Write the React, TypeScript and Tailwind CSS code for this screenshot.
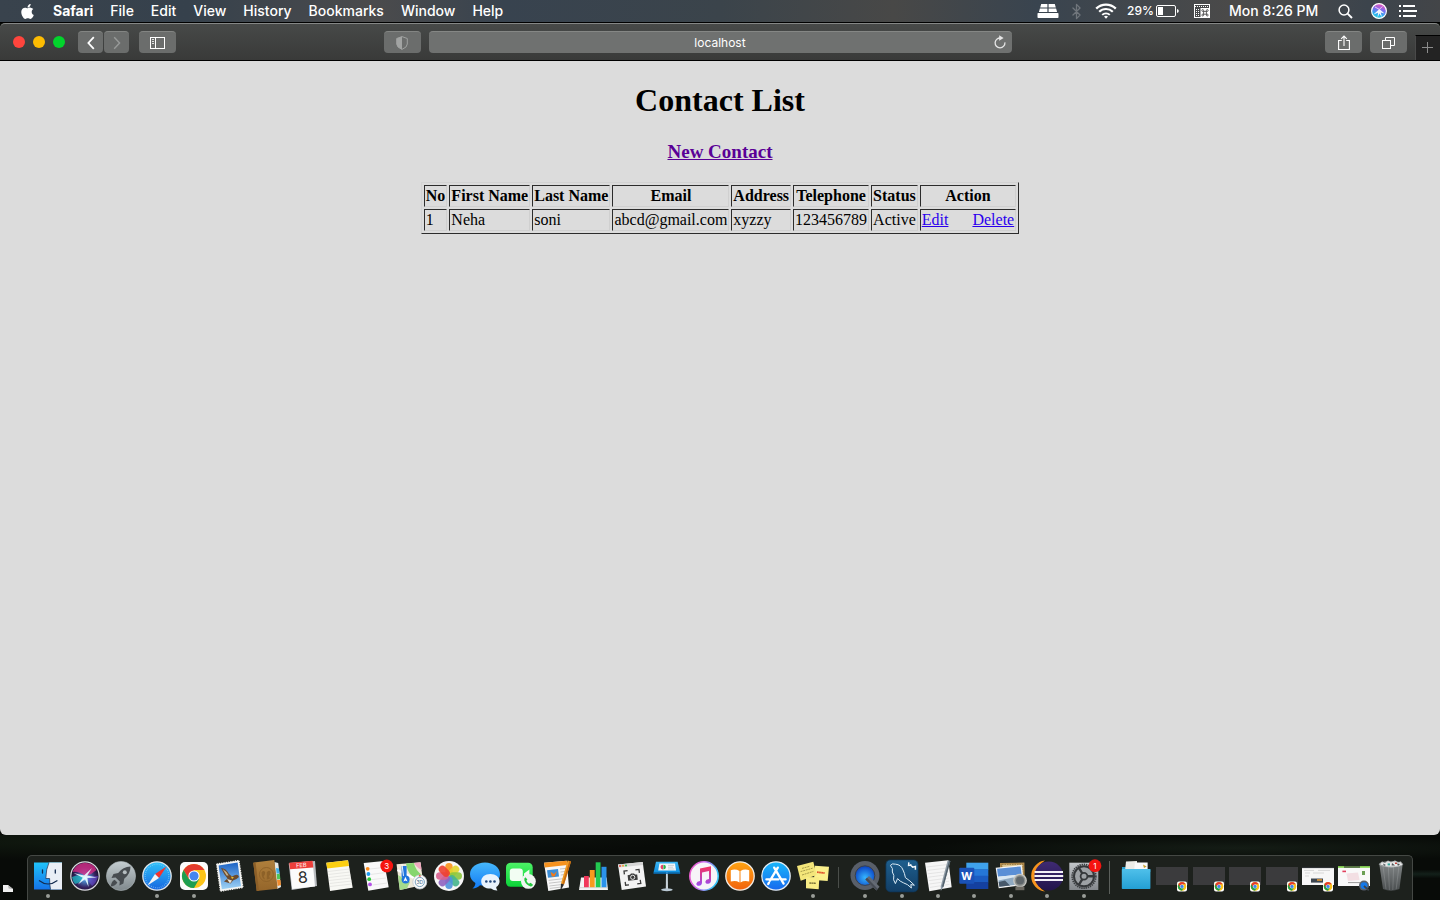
import type { ReactNode } from "react";
import { FaApple } from "react-icons/fa";
import { Bluetooth } from "lucide-react";

const serif = "font-['Liberation_Serif','Times_New_Roman',serif]";
const sans = "font-['Inter','Liberation_Sans',sans-serif]";

/* ---------- Menu bar ---------- */

const menus = ["File", "Edit", "View", "History", "Bookmarks", "Window", "Help"];

function StatusIcon({ w, h, children }: { w: number; h: number; children: ReactNode }) {
  return (
    <svg width={w} height={h} viewBox={`0 0 ${w} ${h}`} fill="none" className="shrink-0" aria-hidden="true">
      {children}
    </svg>
  );
}

function MenuBar() {
  return (
    <header
      className={`${sans} flex h-[23px] shrink-0 items-center justify-between border-b border-black bg-[linear-gradient(90deg,#39434d_0%,#36414c_13%,#4b4b4c_26%,#38434f_35%,#3b444b_50%,#484847_62%,#39444f_72%,#4b4a49_86%,#3c444c_95%,#434548_100%)] pl-[19px] pr-[22px] text-[14px] leading-[22px] text-white`}
    >
      <nav className="flex items-center gap-[17px] font-medium">
        <button aria-label="Apple" className="text-[17px]">
          <FaApple />
        </button>
        <button className="font-bold">Safari</button>
        {menus.map((m) => (
          <button key={m}>{m}</button>
        ))}
      </nav>
      <div className="flex items-center">
        <StatusIcon w={22} h={16}>
          <path
            d="M4.2 1H10.4V4.4H3.2ZM11.6 1H17.8L18.8 4.4H11.6ZM2.9 5.4H10.4V9H1.9ZM11.6 5.4H19.1L20.1 9H11.6Z"
            fill="#fff"
          />
          <rect x="0.5" y="10" width="21" height="5" rx="0.8" fill="#fff" />
        </StatusIcon>
        <Bluetooth className="ml-[9px] h-[17px] w-[17px] text-[#70767c]" strokeWidth={1.8} />
        <span className="ml-[10px] flex">
          <StatusIcon w={22} h={16}>
            <path d="M1.2 5.6A14 14 0 0 1 20.8 5.6" stroke="#fff" strokeWidth="2.3" />
            <path d="M4.2 8.8A9.7 9.7 0 0 1 17.8 8.8" stroke="#fff" strokeWidth="2.2" />
            <path d="M7.2 11.9A5.5 5.5 0 0 1 14.8 11.9" stroke="#fff" strokeWidth="2" />
            <path d="M11 15.8L9 13.6A2.9 2.9 0 0 1 13 13.6Z" fill="#fff" />
          </StatusIcon>
        </span>
        <span className="ml-[10px] w-[29px] text-[12px] font-medium">29%</span>
        <StatusIcon w={23} h={12}>
          <rect x="0.5" y="0.5" width="19" height="11" rx="1.5" stroke="#fff" />
          <rect x="2" y="2" width="5" height="8" fill="#fff" />
          <path d="M21 4V8Q22.8 7.4 22.8 6T21 4Z" fill="#fff" />
        </StatusIcon>
        <span className="ml-[15px] flex">
          <StatusIcon w={16} h={15}>
            <rect x="0.5" y="0.5" width="15" height="13" stroke="#fff" />
            <path d="M1 2.5H15" stroke="#fff" strokeDasharray="1 1" />
            <path d="M2 5.5H6M2 7.5H6M2 9.5H6M2 11.5H6" stroke="#fff" strokeDasharray="1 1" />
            <rect x="6.5" y="4" width="9" height="9.5" fill="#fff" />
            <path
              d="M9.6 7.4H12.4V10.2H9.6ZM9.6 7.4H8.7A.9 .9 0 1 1 9.6 6.5ZM12.4 7.4V6.5A.9 .9 0 1 1 13.3 7.4ZM9.6 10.2V11.1A.9 .9 0 1 1 8.7 10.2ZM12.4 10.2H13.3A.9 .9 0 1 1 12.4 11.1Z"
              stroke="#3c3c3c"
              strokeWidth="0.8"
            />
          </StatusIcon>
        </span>
        <span className="ml-[19px] w-[90px] whitespace-nowrap font-medium">Mon 8:26 PM</span>
        <span className="ml-[19px] mt-px flex">
          <StatusIcon w={15} h={15}>
            <circle cx="6" cy="6" r="4.9" stroke="#fff" strokeWidth="1.5" />
            <path d="M9.6 9.6L14 14" stroke="#fff" strokeWidth="1.9" />
          </StatusIcon>
        </span>
        <span className="ml-[17px] flex">
          <StatusIcon w={18} h={18}>
            <defs>
              <linearGradient id="mini-siri" x1="0.6" y1="0" x2="0.3" y2="1">
                <stop offset="0" stopColor="#f04fb8" />
                <stop offset="0.4" stopColor="#7a6df0" />
                <stop offset="0.75" stopColor="#25b4f0" />
                <stop offset="1" stopColor="#3fdcd4" />
              </linearGradient>
            </defs>
            <circle cx="9" cy="9" r="7.4" fill="url(#mini-siri)" stroke="#fff" strokeWidth="1.2" />
            <path d="M9.4 7L14.6 11.4L10.8 10.4L12 15.4L9.4 11.4L7.6 15.6L8 10.8L3.4 12.4Z" fill="#fff" opacity="0.92" />
            <path d="M5 5L9.4 7.4L12.4 4.4" stroke="#fbd3f0" strokeWidth="0.9" />
          </StatusIcon>
        </span>
        <span className="ml-[11px] flex">
          <StatusIcon w={19} h={12}>
            <path d="M0 1H2M0 6H2M0 11H2" stroke="#fff" strokeWidth="2" />
            <path d="M4 1H16M4 6H18M4 11H17" stroke="#fff" strokeWidth="2" />
          </StatusIcon>
        </span>
      </div>
    </header>
  );
}

/* ---------- Browser toolbar ---------- */

function ToolButton({ label, className, children }: { label: string; className: string; children: ReactNode }) {
  return (
    <button
      aria-label={label}
      className={`flex h-[22px] items-center justify-center rounded-[4px] border-t border-[#838583] bg-[#6b6d6c] ${className}`}
    >
      {children}
    </button>
  );
}

function Toolbar() {
  return (
    <div className="grid h-[38px] shrink-0 grid-cols-[1fr_minmax(0,583px)_1fr] items-center rounded-t-[5px] border-b border-t border-b-black border-t-[#858786] bg-gradient-to-b from-[#474948] to-[#393a39]">
      <div className="flex items-center pl-[13px] pr-2">
        <div className="flex gap-2">
          <button aria-label="Close" className="h-3 w-3 rounded-full bg-[#ff453d]" />
          <button aria-label="Minimize" className="h-3 w-3 rounded-full bg-[#fdbc02]" />
          <button aria-label="Zoom" className="h-3 w-3 rounded-full bg-[#02d42c]" />
        </div>
        <div className="ml-[13px] flex gap-px">
          <ToolButton label="Back" className="w-[25px]">
            <StatusIcon w={8} h={14}>
              <path d="M6.8 1.2L1.4 7L6.8 12.8" stroke="#fff" strokeWidth="1.8" />
            </StatusIcon>
          </ToolButton>
          <ToolButton label="Forward" className="w-[25px]">
            <StatusIcon w={8} h={14}>
              <path d="M1.2 1.2L6.6 7L1.2 12.8" stroke="#989a99" strokeWidth="1.4" />
            </StatusIcon>
          </ToolButton>
        </div>
        <ToolButton label="Sidebar" className="ml-[10px] w-[37px]">
          <StatusIcon w={15} h={12}>
            <rect x="0.5" y="0.5" width="14" height="11" stroke="#fff" />
            <path d="M5.5 0V12" stroke="#fff" />
            <path d="M2 2.5H4M2 4.5H4M2 6.5H4" stroke="#fff" strokeWidth="0.8" />
          </StatusIcon>
        </ToolButton>
        <ToolButton label="Privacy report" className="ml-auto w-[37px]">
          <StatusIcon w={12} h={14}>
            <path d="M6 0.6L11.3 2.5V8Q11.3 11.3 6 13.4Q0.7 11.3 0.7 8V2.5Z" stroke="#9fa1a0" />
            <path d="M6 0.6V13.4Q0.7 11.3 0.7 8V2.5Z" fill="#a2a4a3" />
          </StatusIcon>
        </ToolButton>
      </div>
      <div className="flex h-[22px] items-center rounded-[4px] border-t border-[#858785] bg-[#6f7170] pl-6">
        <input
          aria-label="Address"
          defaultValue="localhost"
          className={`${sans} min-w-0 flex-1 bg-transparent text-center text-[12px] leading-5 text-white outline-none`}
        />
        <button aria-label="Reload" className="flex w-6 justify-center pb-0.5">
          <StatusIcon w={13} h={14}>
            <path d="M8 3.1A4.9 4.9 0 1 0 11.9 7.4" stroke="#e6e6e6" strokeWidth="1.3" />
            <path d="M6.2 0.2L10.6 3L6.2 5.8Z" fill="#e6e6e6" />
          </StatusIcon>
        </button>
      </div>
      <div className="flex h-full items-center justify-end">
        <ToolButton label="Share" className="w-[37px]">
          <StatusIcon w={12} h={16}>
            <path d="M3.8 5.5H0.6V14.5H11.4V5.5H8.2" stroke="#fff" strokeWidth="1.1" />
            <path d="M6 11V1.2M3.2 3.9L6 1.1L8.8 3.9" stroke="#fff" strokeWidth="1.1" />
          </StatusIcon>
        </ToolButton>
        <ToolButton label="Tab overview" className="ml-2 w-[37px]">
          <StatusIcon w={13} h={12}>
            <rect x="0.5" y="3.5" width="8" height="8" stroke="#fff" />
            <path d="M3.5 3V0.5H12.5V8.5H9" stroke="#fff" />
          </StatusIcon>
        </ToolButton>
        <button
          aria-label="New tab"
          className="ml-2 flex h-[25px] w-[25px] items-center justify-center self-end border-l border-t border-l-[#4a4a4a] border-t-black bg-[#232323] pb-0.5 pr-0.5"
        >
          <StatusIcon w={11} h={11}>
            <path d="M5.5 0V11M0 5.5H11" stroke="#8c8c8c" />
          </StatusIcon>
        </button>
      </div>
    </div>
  );
}

/* ---------- Page ---------- */

const columns = ["No", "First Name", "Last Name", "Email", "Address", "Telephone", "Status"];
const contacts = [["1", "Neha", "soni", "abcd@gmail.com", "xyzzy", "123456789", "Active"]];
const cell = "border border-b-[#d0d0d0] border-l-[#2c2c2c] border-r-[#d0d0d0] border-t-[#2c2c2c] p-px";

function ContactPage() {
  return (
    <main className={`${serif} flex flex-1 flex-col items-center rounded-b-[6px] bg-[#dcdcdc] pt-[21px] text-black`}>
      <h1 className="text-[32px] font-bold leading-[37px]">Contact List</h1>
      <h3 className="mt-[22px] text-[19px] font-bold leading-[22px]">
        <a href="#new" className="text-[#5a0096] underline">
          New Contact
        </a>
      </h3>
      <table className="mt-[19px] border-separate border-spacing-[2px] border border-b-[#2c2c2c] border-l-[#d3d3d3] border-r-[#2c2c2c] border-t-[#d3d3d3] text-[16px] leading-[18px]">
        <thead>
          <tr>
            {columns.map((c) => (
              <th key={c} className={`${cell} text-center font-bold`}>
                {c}
              </th>
            ))}
            <th className={`${cell} text-center font-bold`}>Action</th>
          </tr>
        </thead>
        <tbody>
          {contacts.map((row) => (
            <tr key={row[0]}>
              {row.map((v, i) => (
                <td key={i} className={cell}>
                  {v}
                </td>
              ))}
              <td className={cell}>
                <a href="#edit" className="text-[#2a00ee] underline">
                  Edit
                </a>
                <a href="#delete" className="ml-6 text-[#2a00ee] underline">
                  Delete
                </a>
              </td>
            </tr>
          ))}
        </tbody>
      </table>
    </main>
  );
}

/* ---------- Dock icons, drawn on a 36x36 grid ---------- */

function Gradients() {
  const vertical: [string, string, string][] = [
    ["g-finder", "#1fc3fb", "#1573e8"],
    ["g-rocket", "#c4cdd0", "#7f888c"],
    ["g-safari", "#2fc2f8", "#1665e0"],
    ["g-mail", "#1b62c4", "#9fd3f6"],
    ["g-book", "#b0803c", "#94652a"],
    ["g-msg", "#46b8fc", "#127af5"],
    ["g-green", "#4cf266", "#0bd338"],
    ["g-music", "#f8335c", "#9a4cf2"],
    ["g-books", "#ffa412", "#f2620d"],
    ["g-store", "#19b7fb", "#1769ee"],
    ["g-key", "#3db7f5", "#0b8de0"],
    ["g-sql", "#1e5f8e", "#123e66"],
    ["g-folder", "#4fc0ea", "#239fd4"],
    ["g-pref", "#c2c6ca", "#83878c"],
    ["g-trash", "#9a9ea0", "#55595c"],
    ["g-eclipse", "#3f2a72", "#22154c"],
  ];
  return (
    <svg width="0" height="0" className="absolute" aria-hidden="true">
      <defs>
        {vertical.map(([id, a, b]) => (
          <linearGradient key={id} id={id} x1="0" y1="0" x2="0" y2="1">
            <stop offset="0" stopColor={a} />
            <stop offset="1" stopColor={b} />
          </linearGradient>
        ))}
        <linearGradient id="g-ring" x1="0" y1="0" x2="1" y2="0.3">
          <stop offset="0" stopColor="#f557c4" />
          <stop offset="0.5" stopColor="#c86df0" />
          <stop offset="1" stopColor="#39c3f7" />
        </linearGradient>
        <radialGradient id="g-siri" cx="0.5" cy="0.55" r="0.55">
          <stop offset="0" stopColor="#e8f6ff" />
          <stop offset="0.25" stopColor="#4a86c8" />
          <stop offset="0.65" stopColor="#35225f" />
          <stop offset="1" stopColor="#120e24" />
        </radialGradient>
        <radialGradient id="g-qt" cx="0.5" cy="0.6" r="0.55">
          <stop offset="0" stopColor="#35b6ff" />
          <stop offset="1" stopColor="#0d49c8" />
        </radialGradient>
      </defs>
    </svg>
  );
}

function ChromeMark({ x, y, r }: { x: number; y: number; r: number }) {
  return (
    <g transform={`translate(${x} ${y}) scale(${r / 12})`}>
      <circle r="12" fill="#fcc419" />
      <path d="M-10.4 -6A12 12 0 0 1 10.4 -6H0L-5.2 3Z" fill="#e33b2e" />
      <path d="M-10.4 -6A12 12 0 0 0 0 12L5.2 3L0 0L-5.2 3Z" fill="#1e9e50" />
      <circle r="5.6" fill="#fff" />
      <circle r="4.6" fill="#4285f0" />
    </g>
  );
}

function Badge({ x, y, n }: { x: number; y: number; n: string }) {
  return (
    <>
      <circle cx={x} cy={y} r="6.4" fill="#f5140f" />
      <text x={x} y={y + 3} fontSize="8" textAnchor="middle" fill="#fff">
        {n}
      </text>
    </>
  );
}

const petals = ["#f9951b", "#e3d62c", "#8cc63e", "#45b58c", "#4f93dc", "#8f63c0", "#d9608f", "#ee3f30"];

const icons: Record<string, ReactNode> = {
  Finder: (
    <>
      <rect x="4" y="4.5" width="28" height="27" fill="url(#g-finder)" />
      <path d="M19 4.5H32V31.5H20.5Q19.5 26 19.6 20.5H15.8Q16 11 19 4.5Z" fill="#e9eef6" />
      <path d="M12.5 12V15M25.3 12V15" stroke="#132b50" strokeWidth="1.3" strokeLinecap="round" />
      <path d="M9 22.5Q18 29.5 27.4 22.5" stroke="#132b50" strokeWidth="1.1" fill="none" />
      <path d="M19 4.5Q16 11 15.8 20.5H19.6Q19.5 26 20.5 31.5" stroke="#132b50" strokeWidth="0.7" fill="none" />
    </>
  ),
  Siri: (
    <>
      <circle cx="18" cy="18" r="14.2" fill="url(#g-siri)" stroke="#d9d9de" strokeWidth="1.2" />
      <path d="M5.4 14Q9 5.4 18 4.8Q27 5.4 29.4 12Q24 17 18.5 18.5Q12 13 5.4 14Z" fill="#d62d86" opacity="0.8" />
      <path d="M5 19Q12 15.6 18.5 18.5Q13 25 8 26Q5.4 23 5 19Z" fill="#1fb9c4" opacity="0.75" />
      <path d="M18.5 18.5L31 18Q29.6 25 25 28Z" fill="#6a4fd8" opacity="0.6" />
      <path d="M6.6 15L17 17.4L25 10L20.2 17.6L30 19.6L20.4 20L21.6 29L18 21.2L11 26.4L15.8 19.8Z" fill="#e9fdff" opacity="0.9" />
    </>
  ),
  Launchpad: (
    <>
      <circle cx="18" cy="18" r="14.6" fill="url(#g-rocket)" stroke="#aab2b5" strokeWidth="0.6" />
      <path
        d="M27.5 8.5Q20 8.5 15.2 15L10.5 16L8.5 20L12.6 19.4L16.8 23.4L16.4 27.6L20.4 25.4L21.2 20.8Q27.5 16 27.5 8.5Z"
        fill="#474c50"
      />
      <circle cx="21.8" cy="14.2" r="2" fill="#b5bdc0" />
      <path d="M11.6 21.8L14.4 24.6Q12.5 28 7.8 28.4Q8.2 23.6 11.6 21.8Z" fill="#474c50" />
    </>
  ),
  Safari: (
    <>
      <circle cx="18" cy="18" r="14.2" fill="url(#g-safari)" stroke="#dfe4e8" strokeWidth="1.3" />
      <circle cx="18" cy="18" r="11.8" fill="none" stroke="#9ed6fa" strokeWidth="1.2" strokeDasharray="0.5 1.5" />
      <path d="M27.5 8.5L20 20L16 16Z" fill="#f5322c" />
      <path d="M8.5 27.5L16 16L20 20Z" fill="#f4f4f4" />
    </>
  ),
  Chrome: (
    <>
      <rect x="4" y="4" width="28" height="28" rx="5" fill="#fcfcfc" />
      <ChromeMark x={18} y={18} r={12} />
    </>
  ),
  Mail: (
    <>
      <path d="M4.6 6L27 2.5L31 29.5L8.4 33.2Z" fill="#f4f4f2" stroke="#f4f4f2" strokeWidth="1.2" strokeDasharray="1.3 1" />
      <path d="M6.6 7.4L25.6 4.4L29 28.2L9.8 31.2Z" fill="url(#g-mail)" />
      <path d="M9 10Q14 10 17 16L20 18.4Q26 15 27 19Q24 22 21 22.4L18.6 25.6L12 23.6L15.6 20.6Q11.6 16 9 10Z" fill="#6b4a2d" />
      <path d="M10.6 11Q14.4 13 16.6 17.6L14.6 17.4Z" fill="#c9b48e" />
      <path d="M15 21L20 22.6L18 25.4Z" fill="#e8e2d6" />
      <path d="M19 18.6L22 19.6L20 21Z" fill="#f3c12d" />
    </>
  ),
  Contacts: (
    <>
      <path d="M25.3 4L29.2 5L32 29L28 31Z" fill="#e7e7e2" />
      <path d="M27 10L30 10.5L30.6 15.5L27.6 15.6Z" fill="#3fb0e8" />
      <path d="M27.6 16L30.8 16L31.4 21L28.2 21.4Z" fill="#52c65a" />
      <path d="M28 22L31.4 21.8L32 27L28.6 28Z" fill="#f08b2c" />
      <path d="M4.3 4.7L25.3 2L28.6 30.7L7.7 33Z" fill="url(#g-book)" />
      <path d="M4.3 4.7L6.6 4.4L10 32.8L7.7 33Z" fill="#8c5f28" />
      <circle cx="17.4" cy="16.5" r="7" fill="none" stroke="#8d6128" strokeWidth="0.9" />
      <path
        d="M12.6 14.2Q14.8 11.6 16.2 14.4Q16 17.4 14.6 18.2L16 21.6Q12.4 20.6 12.6 14.2ZM17.8 14.2Q20 11.2 21.6 14Q21.4 17 20 18L21 20.6L17.8 21.6Z"
        fill="#8d6128"
      />
    </>
  ),
  Calendar: (
    <>
      <path d="M3.7 5.4L30 3L32 28L6.7 32Z" fill="#b9bcc0" />
      <path d="M4.4 5L27.6 3L30 28.4L7.2 31Z" fill="#fbfbfb" />
      <path d="M4.2 4.7L27.6 2.8L28.3 9.6L5 11.2Z" fill="#ec3e3a" />
      <text x="16.4" y="9.2" fontSize="5.6" textAnchor="middle" fill="#fff" transform="rotate(-4 16 8)">
        FEB
      </text>
      <text x="17.8" y="25" fontSize="16" textAnchor="middle" fill="#2b2b2b" transform="rotate(-4 18 20)">
        8
      </text>
    </>
  ),
  Notes: (
    <>
      <path d="M5.3 4.7L27 2.3L31.7 29.7L9 33Z" fill="#f8f8f4" />
      <path d="M5.3 4.7L27 2.3L28 8L6.2 10.4Z" fill="#fccf10" />
      <path
        d="M7 13.5L28.4 11M7.4 16.5L29 14M7.8 19.5L29.6 17M8 22.5L30 20M8.4 25.5L30.6 23M8.8 28.5L31 26"
        stroke="#dcdcd8"
        strokeWidth="0.6"
      />
    </>
  ),
  Reminders: (
    <>
      <path d="M5.7 5L26 3L30.7 29.3L10.3 32.7Z" fill="#f9f9f9" />
      <path d="M12 11L26.4 9.4M12.8 16.4L27.4 14.6M13.8 21.6L28.2 20M14.6 27L29.2 25" stroke="#dadada" strokeWidth="0.6" />
      <circle cx="9.7" cy="10.8" r="1.9" fill="#fb8c1c" />
      <circle cx="10.4" cy="16" r="1.9" fill="#1d9bf3" />
      <circle cx="11.2" cy="21.2" r="1.9" fill="#2ac73a" />
      <circle cx="12" cy="26.4" r="1.9" fill="#b553e6" />
      <Badge x={28.7} y={8} n="3" />
    </>
  ),
  Maps: (
    <>
      <path d="M2.5 6.3L26.5 4.3L29.5 27L5.8 32Z" fill="#eee8d8" />
      <path d="M12 5.6L20 5Q21 12 29 18V24Q14 20 12 5.6Z" fill="#86d66e" />
      <path d="M20 5L26.5 4.3L27.6 12Q22 9 20 5Z" fill="#f0a8bf" />
      <path d="M4 17L16 24L13 30.4L5.8 32Z" fill="#a5dc8c" />
      <path d="M3.4 12L28 24" stroke="#fff" strokeWidth="2" />
      <path d="M7.6 8H12.6V19H7.6Z" fill="#1f74dd" />
      <path d="M8 6.2L9.8 20.5" stroke="#fff" strokeWidth="0.9" />
      <circle cx="11.6" cy="21.4" r="4" fill="#1f74dd" />
      <path d="M11.4 18.8L13.6 23.6L11.5 22.6L9.4 23.6Z" fill="#fff" />
      <circle cx="25.8" cy="24" r="7" fill="#fafafa" stroke="#c2cad0" strokeWidth="0.8" />
      <circle cx="25.8" cy="24" r="4.6" fill="none" stroke="#7aa3bd" strokeWidth="1" />
      <text x="25.8" y="26" fontSize="5" textAnchor="middle" fill="#3a6b8c">
        3D
      </text>
      <path d="M24.6 18.4H27L25.8 16.4Z" fill="#e3342c" />
    </>
  ),
  Photos: (
    <>
      <circle cx="18" cy="18" r="15" fill="#f6f6f6" />
      {petals.map((c, i) => (
        <rect
          key={c}
          x="14.3"
          y="5"
          width="7.4"
          height="12.6"
          rx="3.7"
          fill={c}
          opacity="0.9"
          transform={`rotate(${i * 45} 18 18)`}
        />
      ))}
    </>
  ),
  Messages: (
    <>
      <path
        d="M18 4.6C9.6 4.6 3 9.6 3 16.2C3 20 5 23 8.4 25C8.4 27.4 7 29.4 5.4 30.6C8.8 30.6 11.4 29 13 27.2C25 29.4 33 23 33 16.2C33 9.6 26.4 4.6 18 4.6Z"
        fill="url(#g-msg)"
      />
      <path
        d="M23.4 16C18 16 14.2 19.2 14.2 23.4C14.2 27.6 18 30.8 24 30.6C26 32 28.4 32.6 30.4 32.4C29.6 31.4 29.2 30.2 29.2 29C31.4 27.6 32.6 25.6 32.6 23.4C32.6 19.2 28.6 16 23.4 16Z"
        fill="#e9f3fd"
      />
      <circle cx="19.3" cy="23.5" r="1.3" fill="#24487c" />
      <circle cx="23.4" cy="23.5" r="1.3" fill="#24487c" />
      <circle cx="27.5" cy="23.5" r="1.3" fill="#24487c" />
    </>
  ),
  FaceTime: (
    <>
      <rect x="3" y="4.7" width="26.7" height="24" rx="4.5" fill="url(#g-green)" />
      <rect x="6.8" y="10.6" width="13" height="12.4" rx="3" fill="#f2fdf3" />
      <path d="M21 15.6L26.4 11.4V20L21 18.6Z" fill="#f2fdf3" />
      <circle cx="25.4" cy="23.4" r="7.4" fill="#f1f5f2" />
      <path
        d="M22.4 19.2Q20.8 20 21.4 22.4Q23 27 27.6 28.4Q29.4 28.6 30 26.8L27.6 24.8L26 25.8Q24.2 24.8 23.4 22.8L24.4 21.6Z"
        fill="#24c63f"
      />
    </>
  ),
  Pages: (
    <>
      <path d="M4 4.7L26.7 2.7L29 29.6L8.3 33Z" fill="#f7f7f7" />
      <path d="M4 4.7L26.7 2.7L27.2 7L4.8 9.4Z" fill="#f6921e" />
      <path d="M7 12.2L18 11L19 18.6L8 19.8Z" fill="#3c8fd8" />
      <path d="M10.6 13.8L14 16L17 13L14.8 18.4L11.8 18.6Z" fill="#f27a1a" />
      <path
        d="M20 11L26 10.4M20.4 14L26 13.4M20.8 17L26.4 16.4M8.6 22.4L24 20.6M9 25.2L24 23.4M9.4 28L23 26.4M9.8 30.4L20 29.2"
        stroke="#b9b9b9"
        strokeWidth="0.8"
      />
      <path d="M27.6 2.6L31 3.6L24 26.4L21 25.4Z" fill="#f09a22" />
      <path d="M29.4 3L31 3.6L24 26.4L22.4 25.9Z" fill="#c66a10" />
      <path d="M21 25.4L24 26.4L20.4 33Z" fill="#2c2c2c" />
    </>
  ),
  Numbers: (
    <>
      <path d="M5 19.6H30.6L32 32H3Z" fill="#f3f3f3" />
      <path d="M3.4 29.6H31.8" stroke="#c9c9c9" strokeWidth="0.7" />
      <rect x="8" y="18" width="4.8" height="11.2" fill="#f1385a" />
      <rect x="13.8" y="12" width="4.9" height="17.2" fill="#f79a1e" />
      <rect x="19.7" y="4.3" width="4.8" height="24.9" fill="#22c950" />
      <rect x="25.5" y="8.8" width="5" height="20.4" fill="#2b93ec" />
    </>
  ),
  Screenshot: (
    <>
      <path d="M5 6.4L29.7 4L33 28.4L8.7 32Z" fill="#f3f3f3" />
      <path d="M5 6.4L29.7 4L30.1 7L5.5 9.4Z" fill="#d5d5d5" />
      <circle cx="7" cy="8" r="1" fill="#f04c42" />
      <circle cx="10" cy="7.7" r="1" fill="#f2a531" />
      <circle cx="13" cy="7.4" r="1" fill="#37b94b" />
      <path
        d="M11.4 16.4L11 13L14.6 12.6M22.4 11.8L26 11.4L26.4 14.8M27.2 21.8L27.8 25.4L24.2 25.8M16 26.8L12.6 27.2L12.2 23.8"
        stroke="#3c3c3c"
        strokeWidth="1.3"
        fill="none"
      />
      <path d="M14.6 17.2L17 16.8L18 15.4H21L22 16.4L24.2 16.4L24.8 21.8L15.2 22.8Z" fill="#3c3c3c" />
      <circle cx="19.7" cy="19.3" r="2.1" fill="none" stroke="#f3f3f3" strokeWidth="0.9" />
    </>
  ),
  Keynote: (
    <>
      <path d="M17 14H18.8L19 31H16.8Z" fill="#c9d3da" />
      <ellipse cx="17.9" cy="31.8" rx="5.8" ry="1.5" fill="#b9c8d3" />
      <path d="M7 3.7H28.6L31.2 14.7H4.5Z" fill="url(#g-key)" />
      <path d="M10.4 5.6H26L27 12.4H9.2Z" fill="#f4f7f9" />
      <path d="M14.4 6.8A2.4 2.2 0 0 1 14.4 11.4Z" fill="#2bb24c" />
      <path d="M14 6.8A2.4 2.2 0 0 0 14 11.4Z" fill="#e5446d" />
      <path d="M19 7.4H25M19 9.2H24M19 11H25.4" stroke="#b8c0c6" strokeWidth="0.7" />
      <path d="M4.5 14.7H31.2V15.8H4.5Z" fill="#0b6fb8" />
    </>
  ),
  Music: (
    <>
      <circle cx="18" cy="18" r="14.2" fill="#f7f4f8" stroke="url(#g-ring)" strokeWidth="1.6" />
      <path
        d="M14 10.6L25 8.2V22.4Q25 25.4 22 25.8Q19.2 25.8 19.4 23.4Q19.8 21.4 23 21V13L16 14.6V24.4Q16 27.4 13 27.8Q10.2 27.8 10.4 25.4Q10.8 23.4 14 23Z"
        fill="url(#g-music)"
      />
    </>
  ),
  Books: (
    <>
      <circle cx="18" cy="18" r="14.2" fill="url(#g-books)" stroke="#f0ece6" strokeWidth="1.3" />
      <path
        d="M17.5 13Q13.5 10.6 8.8 12.2V23.6Q13.5 22 17.5 24.4ZM18.5 13Q22.5 10.6 27.2 12.2V23.6Q22.5 22 18.5 24.4Z"
        fill="#fff"
      />
    </>
  ),
  "App Store": (
    <>
      <circle cx="18" cy="18" r="14.2" fill="url(#g-store)" stroke="#e6edf3" strokeWidth="1.3" />
      <path
        d="M16.2 9.6L25.6 25.6M19.8 9.6L12 22.6M11 24.6L10.2 26M8.4 21.4H20.4M24 21.4H27.6"
        stroke="#fff"
        strokeWidth="2.3"
        strokeLinecap="round"
      />
    </>
  ),
  Stickies: (
    <>
      <path d="M20 7.7L34 8.7L32.7 23L19 22Z" fill="#fbf08c" />
      <path d="M2 8L18.3 3.7L21.7 17L5.7 22.7Z" fill="#f4e67a" />
      <path d="M11 19L24.3 19.3L23.7 31.3L11 30.3Z" fill="#f8ec86" />
      <path
        d="M7 10.4L15 8.2M5.6 13.6L17.6 10.2M7 17L18.4 13.4"
        stroke="#94893e"
        strokeWidth="0.8"
        strokeDasharray="2 0.7"
      />
      <path d="M22 14.2L29.6 15" stroke="#e0542d" strokeWidth="1.8" strokeDasharray="1.8 0.3" />
      <path d="M14.4 25L21 25.3" stroke="#6c6430" strokeWidth="1.3" strokeDasharray="1.8 0.3" />
    </>
  ),
  QuickTime: (
    <>
      <circle cx="18" cy="17.6" r="14.5" fill="#595f69" />
      <circle cx="18" cy="17.6" r="9.8" fill="url(#g-qt)" stroke="#3a3f48" strokeWidth="1" />
      <path d="M18.4 21.4L22 18L32.6 28.8L29.4 32.6Z" fill="#646a74" />
      <path d="M18.4 21.4L20 19.8L30.8 31L29.4 32.6Z" fill="#464b54" />
    </>
  ),
  "MySQL Workbench": (
    <>
      <rect x="1.9" y="1.9" width="32.2" height="32" rx="4.5" fill="url(#g-sql)" stroke="#0d3354" strokeWidth="0.7" />
      <path
        d="M6.4 7.4Q8 5 11.6 6.2Q17 6.6 19 12Q20.6 15 21.4 19.6Q26 22.6 30.4 27.2L26.8 26.6L27.4 30Q23.4 25.8 19.4 24.8Q15.8 23.4 13.6 20.6L11.4 25.6Q8.6 22 9.8 17.4Q7.6 14 8.4 10.6Z"
        fill="none"
        stroke="#dcebf5"
        strokeWidth="1"
      />
      <path
        d="M26 6.4L29 9.6M24.8 4.4L24.6 7.4L27.6 7M28.2 9.2L31.4 8.4L31.4 11.8"
        stroke="#f0f6fa"
        strokeWidth="1.5"
        fill="none"
      />
    </>
  ),
  TextEdit: (
    <>
      <path d="M5 4.7L28.3 2.3L31.7 29.3L9.3 33.3Z" fill="#f6f6f6" />
      <path
        d="M6.6 9L27 6.6M7.2 12.4L27.4 10M7.8 15.8L28 13.4M8.4 19.2L28.4 16.6M9 22.6L28.8 20M9.6 26L29 23.2M10 29.4L29.4 26.4"
        stroke="#d8d8d8"
        strokeWidth="0.6"
      />
      <path d="M27.6 2.4L30.4 3L23.4 29L20.8 33L20.8 28.2Z" fill="#8d9aa5" />
      <path d="M29 2.7L30.4 3L23.4 29L22 28.6Z" fill="#52606b" />
    </>
  ),
  Word: (
    <>
      <rect x="10.3" y="4.7" width="22" height="7" fill="#3fa2ec" />
      <rect x="10.3" y="11.2" width="22" height="7" fill="#2577d8" />
      <rect x="10.3" y="17.7" width="22" height="7" fill="#1b5cc2" />
      <rect x="10.3" y="24.2" width="22" height="6.8" fill="#1440a0" />
      <rect x="3.3" y="9.8" width="15" height="16" rx="1" fill="#1a52b8" />
      <text x="10.8" y="21.6" fontSize="11" fontWeight="700" textAnchor="middle" fill="#fff">
        W
      </text>
    </>
  ),
  Preview: (
    <>
      <path d="M7 5L31.4 4.6L31.8 26H7Z" fill="#b08a4c" />
      <path d="M9 6.4H29.8V22H9Z" fill="#dcc692" stroke="#7b5b28" strokeWidth="0.6" strokeDasharray="1.5 1" />
      <path d="M2.7 9.7L28.7 7L31.3 27L5.7 30.3Z" fill="#f5f5f5" />
      <path d="M4 10.8L27.6 8.4L28.6 16.4L5 18.8Z" fill="#5a8fd6" />
      <path d="M5 18.8L28.6 16.4L29.2 21L5.6 23.4Z" fill="#d9e7f2" />
      <path d="M5.4 22.4L20 19.6L29.4 22L29.8 26L6.4 28.8Z" fill="#8fa9c0" />
      <path d="M5.6 24L12 22.6L17 27.4L6.4 28.8Z" fill="#46586a" />
      <circle cx="27" cy="22.6" r="6.2" fill="#8b8f8c" stroke="#c6c6c2" strokeWidth="1.4" />
      <circle cx="27" cy="22.6" r="4" fill="#5e6569" />
      <path d="M22.4 28.6H31.4V32.2H22.4Z" fill="#6d6a62" />
    </>
  ),
  Eclipse: (
    <>
      <path d="M16 2.6A15.6 15.6 0 0 0 16 33.6Q7 28 7 18T16 2.6Z" fill="#f7941e" />
      <circle cx="19.8" cy="18" r="14.4" fill="url(#g-eclipse)" />
      <path d="M5.6 14H34M5.4 18H34.2M5.6 22H34" stroke="#f2f0f7" strokeWidth="1.8" />
    </>
  ),
  "System Preferences": (
    <>
      <rect x="3.3" y="4.7" width="29" height="27.3" fill="url(#g-pref)" />
      <circle cx="18" cy="18.3" r="11.8" fill="none" stroke="#3c3f42" strokeWidth="1.8" strokeDasharray="1.4 0.8" />
      <circle cx="18" cy="18.3" r="10" fill="#9da1a5" stroke="#35383b" strokeWidth="2" />
      <path d="M18 18.3L27.6 18.3M18 18.3L13 10M18 18.3L13 26.6" stroke="#35383b" strokeWidth="2.4" />
      <circle cx="18" cy="18.3" r="3.4" fill="#9da1a5" stroke="#35383b" strokeWidth="1.8" />
      <Badge x={29} y={7.7} n="1" />
    </>
  ),
  Documents: (
    <>
      <path d="M4 9H12L14 11H32.3V14H4Z" fill="#2a9fcb" />
      <path d="M8 3.4L19 3V13H7Z" fill="#ecece8" />
      <path d="M17 4.4H29.6V13H16Z" fill="#fafafa" />
      <path d="M25 6.4L28.6 8.4L26 10Z" fill="#c7a02c" />
      <rect x="3.8" y="11" width="28.6" height="20" rx="0.8" fill="url(#g-folder)" />
    </>
  ),
  Trash: (
    <>
      <path d="M6.2 5.6H29.8L26.4 31Q18 34.6 10 31Z" fill="url(#g-trash)" opacity="0.8" />
      <path
        d="M10 8L13 31M15.4 9L16.4 32M20.6 9L19.8 32M26 8L23.2 31"
        stroke="#c0c4c6"
        strokeWidth="0.7"
        opacity="0.35"
      />
      <path d="M6.8 6.2L9 3.4L12 4.8L15 2.4L18 4.2L22 2.6L25 4.2L28 3.6L29.4 7Q18 12 6.8 6.2Z" fill="#e9e9e9" />
      <path d="M10 5.4L13 7L11 8ZM19 5L22 7.6L18.6 7.4ZM24 5.4L27 6L25 8Z" fill="#4a5053" />
      <path d="M14.6 5.4H17V7.4H14.6Z" fill="#39a59a" />
      <path d="M22 4.4H24V6H22Z" fill="#c2433b" />
      <ellipse cx="18" cy="6.2" rx="11.8" ry="2.6" fill="none" stroke="#a9adaf" strokeWidth="0.7" />
    </>
  ),
};

const windowChrome = (
  <>
    <rect x="2" y="9" width="32" height="18" fill="#3b3b3d" />
    <rect x="23" y="23.4" width="10" height="10" rx="2" fill="#fff" />
    <ChromeMark x={28} y={28.4} r={4.3} />
  </>
);

const windowDoc = (
  <>
    <rect x="2" y="9" width="32" height="18" fill="#f7f7f7" />
    <path d="M2 9.5H34" stroke="#2d3134" strokeWidth="1.2" />
    <path d="M4 12.4H14M18 12.4H30M5 15H10M13 15H24M5 18H9" stroke="#c8c8c8" strokeWidth="0.7" />
    <path d="M11 20.5H23V24.6H11Z" fill="#3d4650" />
    <path d="M17 21H22V23H17Z" fill="#c0883a" />
    <rect x="23" y="23.4" width="10" height="10" rx="2" fill="#fff" />
    <ChromeMark x={28} y={28.4} r={4.3} />
  </>
);

const windowMovie = (
  <>
    <rect x="2" y="8.4" width="32" height="19.6" fill="#f9f9f9" />
    <path d="M2 9H34" stroke="#6fd12f" strokeWidth="1.4" />
    <path d="M8 9H24" stroke="#3a3d3a" strokeWidth="1.2" />
    <path d="M6.4 13.4H10" stroke="#e2405c" strokeWidth="1.6" />
    <path d="M10.4 15.6L22 14.4L23.6 22L12 23Z" fill="#f3dfe3" />
    <path d="M26 13H29V17H26Z" fill="#6ca055" />
    <path d="M12 24.6H24" stroke="#9a9a9a" strokeWidth="1" />
    <circle cx="28" cy="27.6" r="5" fill="#59616d" />
    <circle cx="28" cy="27.6" r="3.4" fill="#1579ea" />
    <path d="M28 28L32.8 32.4" stroke="#3e444d" strokeWidth="1.8" />
  </>
);

type DockEntry = { name: string; art: ReactNode; running?: boolean };
const app = (name: string, running = false): DockEntry => ({ name, art: icons[name], running });

const dockGroups: DockEntry[][] = [
  [
    app("Finder", true),
    app("Siri"),
    app("Launchpad"),
    app("Safari", true),
    app("Chrome", true),
    app("Mail"),
    app("Contacts"),
    app("Calendar"),
    app("Notes"),
    app("Reminders"),
    app("Maps"),
    app("Photos"),
    app("Messages"),
    app("FaceTime"),
    app("Pages"),
    app("Numbers"),
    app("Screenshot"),
    app("Keynote"),
    app("Music"),
    app("Books"),
    app("App Store"),
    app("Stickies", true),
  ],
  [
    app("QuickTime", true),
    app("MySQL Workbench", true),
    app("TextEdit", true),
    app("Word", true),
    app("Preview", true),
    app("Eclipse", true),
    app("System Preferences", true),
  ],
  [
    app("Documents"),
    { name: "Window 1", art: windowChrome },
    { name: "Window 2", art: windowChrome },
    { name: "Window 3", art: windowChrome },
    { name: "Window 4", art: windowChrome },
    { name: "Window 5", art: windowDoc },
    { name: "Window 6", art: windowMovie },
    app("Trash"),
  ],
];

function DockItem({ name, art, running }: DockEntry) {
  return (
    <button aria-label={name} className="flex min-w-0 flex-1 flex-col items-center">
      <svg viewBox="0 0 36 36" className={`${sans} h-9 w-9 shrink-0`} aria-hidden="true">
        {art}
      </svg>
      {running && <span className="h-1 w-1 rounded-full bg-[#999c98]" />}
    </button>
  );
}

function Dock() {
  return (
    <footer className="flex h-[65px] shrink-0 items-end bg-[radial-gradient(ellipse_at_8%_10%,#111a10_0%,transparent_22%),radial-gradient(ellipse_at_30%_0%,#0e130e_0%,transparent_20%),radial-gradient(ellipse_at_86%_20%,#141c15_0%,transparent_18%),radial-gradient(ellipse_at_99%_60%,#13201a_0%,transparent_8%)]">
      <Gradients />
      <div className="w-[27px] shrink-0 pb-2 pl-[3px]">
        <StatusIcon w={10} h={7}>
          <path d="M0 0H5L10 4V7H0Z" fill="#efefef" />
          <path d="M5 0L10 4L5.6 3.6Z" fill="#b5b5b5" />
        </StatusIcon>
      </div>
      <div className="mr-[27px] flex h-[45px] min-w-0 flex-1 rounded-t-[5px] border-l border-r border-t border-[#444844] bg-[#1d211d] pl-0.5 pr-[3px] pt-0.5">
        {dockGroups.map((group, g) => (
          <div key={g} className="contents">
            {g > 0 && (
              <div className="flex w-4 shrink-0 justify-center">
                <div className={g === 1 ? "mt-[9px] h-[21px] w-px bg-[#4a4e4a]" : "mt-[3px] h-[33px] w-px bg-[#5b5f5b]"} />
              </div>
            )}
            {group.map((item) => (
              <DockItem key={item.name} {...item} />
            ))}
          </div>
        ))}
      </div>
    </footer>
  );
}

export default function App() {
  return (
    <div className="flex min-h-screen flex-col bg-[#080b08]">
      <MenuBar />
      <Toolbar />
      <ContactPage />
      <Dock />
    </div>
  );
}
